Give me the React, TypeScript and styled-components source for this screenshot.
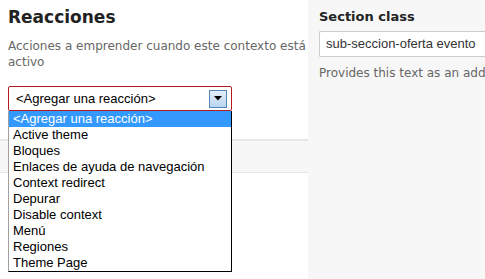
import React from 'react';
import styled, { createGlobalStyle } from 'styled-components';

const reactions = [
  '<Agregar una reacción>',
  'Active theme',
  'Bloques',
  'Enlaces de ayuda de navegación',
  'Context redirect',
  'Depurar',
  'Disable context',
  'Menú',
  'Regiones',
  'Theme Page',
];

const GlobalStyle = createGlobalStyle`
  html, body {
    margin: 0;
    padding: 0;
    background: #ffffff;
    overflow: hidden;
  }
  * {
    box-sizing: border-box;
  }
`;

const App = () => {
  return (
    <>
      <GlobalStyle />
      <Page>
        <MainColumn>
          <Intro>
            <Title>Reacciones</Title>
            <Desc>Acciones a emprender cuando este contexto está activo</Desc>
          </Intro>
          <SelectWrap>
            <SelectBox>
              <SelectText>{reactions[0]}</SelectText>
              <ArrowButton>
                <svg width="8" height="5" viewBox="0 0 8 5">
                  <path d="M0 0 L8 0 L4 4.5 Z" fill="#000" />
                </svg>
              </ArrowButton>
            </SelectBox>
            <OptionList>
              {reactions.map((r, i) => (
                <OptionItem key={r} $active={i === 0}>
                  {r}
                </OptionItem>
              ))}
            </OptionList>
          </SelectWrap>
          <TableHead />
        </MainColumn>
        <SideColumn>
          <Label>Section class</Label>
          <TextInput>sub-seccion-oferta evento</TextInput>
          <Help>Provides this text as an additional class on the section</Help>
        </SideColumn>
      </Page>
    </>
  );
};

const Page = styled.div`
  display: flex;
  width: 485px;
  height: 279px;
  overflow: hidden;
`;

const MainColumn = styled.div`
  width: 308px;
  flex-shrink: 0;
  background: #ffffff;
  display: flex;
  flex-direction: column;
`;

const Intro = styled.div`
  padding: 5px 0 0 8px;
`;

const Title = styled.h2`
  margin: 0;
  font-family: 'DejaVu Sans', Verdana, sans-serif;
  font-size: 17px;
  font-weight: bold;
  line-height: 24px;
  color: #222222;
`;

const Desc = styled.p`
  margin: 9px 0 0 0;
  width: 298px;
  font-family: 'DejaVu Sans', Verdana, sans-serif;
  font-size: 12px;
  line-height: 16px;
  color: #666666;
`;

const SelectWrap = styled.div`
  position: relative;
  margin: 16px 0 0 8px;
  width: 224px;
  z-index: 2;
`;

const SelectBox = styled.div`
  display: flex;
  align-items: center;
  justify-content: space-between;
  height: 25px;
  padding: 0 4px 0 7px;
  border: 1px solid #b51c22;
  border-radius: 2px;
  background: #ffffff;
`;

const SelectText = styled.span`
  font-family: 'Liberation Sans', Arial, sans-serif;
  font-size: 13px;
  color: #000000;
`;

const ArrowButton = styled.span`
  display: flex;
  align-items: center;
  justify-content: center;
  width: 18px;
  height: 18px;
  border: 1px solid #4f87bb;
  background: linear-gradient(#e4eef9, #b9d6f0);
`;

const OptionList = styled.ul`
  position: absolute;
  top: 25px;
  left: 0;
  width: 224px;
  margin: 0;
  padding: 0;
  list-style: none;
  background: #ffffff;
  border: 1px solid #000000;
  border-left-color: #a0a0a0;
  border-top: none;
`;

const OptionItem = styled.li<{ $active: boolean }>`
  height: 16px;
  padding: 0 4px;
  font-family: 'Liberation Sans', Arial, sans-serif;
  font-size: 13px;
  line-height: 16px;
  white-space: nowrap;
  background: ${(p) => (p.$active ? '#3399ff' : 'transparent')};
  color: ${(p) => (p.$active ? '#ffffff' : '#000000')};
`;

const TableHead = styled.div`
  margin-top: 28px;
  height: 34px;
  background: #f7f7f7;
  border-top: 2px solid #e6e6e6;
  border-bottom: 1px solid #e6e6e6;
`;

const SideColumn = styled.div`
  flex: 1;
  min-width: 0;
  background: #f7f7f7;
  padding: 9px 0 0 11px;
  display: flex;
  flex-direction: column;
`;

const Label = styled.div`
  font-family: 'DejaVu Sans', Verdana, sans-serif;
  font-size: 13px;
  font-weight: bold;
  line-height: 16px;
  color: #222222;
`;

const TextInput = styled.div`
  margin-top: 6px;
  width: 180px;
  height: 26px;
  padding: 0 6px;
  border: 1px solid #cccccc;
  border-right: none;
  border-radius: 2px 0 0 2px;
  background: #ffffff;
  font-family: 'Liberation Sans', Arial, sans-serif;
  font-size: 13px;
  line-height: 24px;
  color: #333333;
  white-space: nowrap;
  flex-shrink: 0;
`;

const Help = styled.p`
  margin: 8px 0 0 0;
  font-family: 'DejaVu Sans', Verdana, sans-serif;
  font-size: 12px;
  line-height: 16px;
  color: #666666;
  white-space: nowrap;
`;

export default App;
